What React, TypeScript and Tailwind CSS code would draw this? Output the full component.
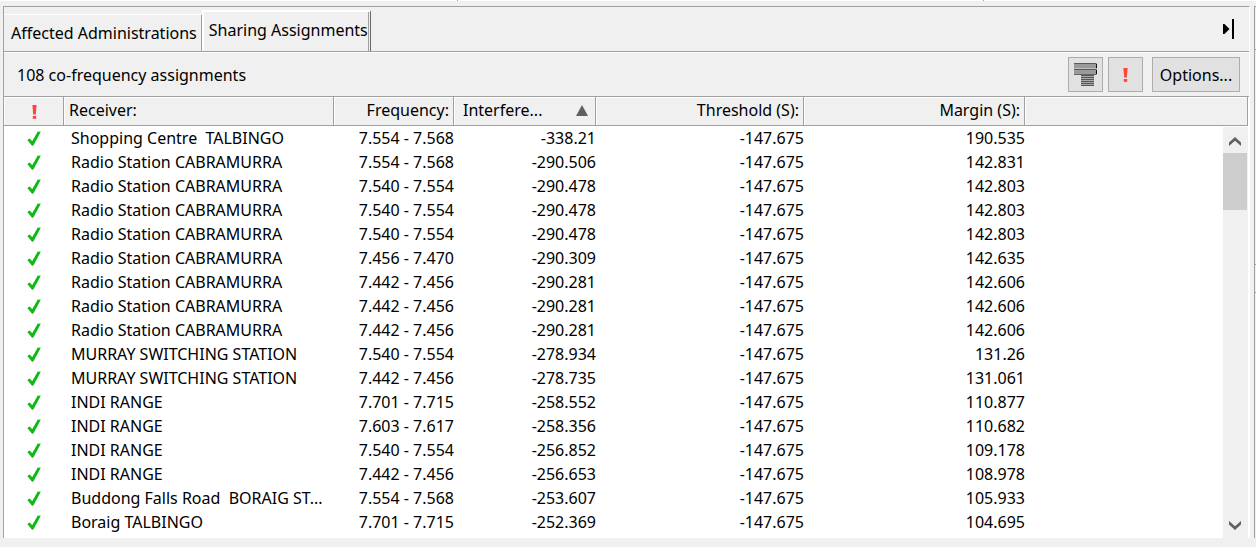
import { useState } from 'react'

interface Row { receiver: string; frequency: string; interference: string; margin: string }

const THRESHOLD = '-147.675'

const ROWS: Row[] = [
  { receiver: 'Shopping Centre  TALBINGO', frequency: '7.554 - 7.568', interference: '-338.21', margin: '190.535' },
  { receiver: 'Radio Station CABRAMURRA', frequency: '7.554 - 7.568', interference: '-290.506', margin: '142.831' },
  { receiver: 'Radio Station CABRAMURRA', frequency: '7.540 - 7.554', interference: '-290.478', margin: '142.803' },
  { receiver: 'Radio Station CABRAMURRA', frequency: '7.540 - 7.554', interference: '-290.478', margin: '142.803' },
  { receiver: 'Radio Station CABRAMURRA', frequency: '7.540 - 7.554', interference: '-290.478', margin: '142.803' },
  { receiver: 'Radio Station CABRAMURRA', frequency: '7.456 - 7.470', interference: '-290.309', margin: '142.635' },
  { receiver: 'Radio Station CABRAMURRA', frequency: '7.442 - 7.456', interference: '-290.281', margin: '142.606' },
  { receiver: 'Radio Station CABRAMURRA', frequency: '7.442 - 7.456', interference: '-290.281', margin: '142.606' },
  { receiver: 'Radio Station CABRAMURRA', frequency: '7.442 - 7.456', interference: '-290.281', margin: '142.606' },
  { receiver: 'MURRAY SWITCHING STATION', frequency: '7.540 - 7.554', interference: '-278.934', margin: '131.26' },
  { receiver: 'MURRAY SWITCHING STATION', frequency: '7.442 - 7.456', interference: '-278.735', margin: '131.061' },
  { receiver: 'INDI RANGE', frequency: '7.701 - 7.715', interference: '-258.552', margin: '110.877' },
  { receiver: 'INDI RANGE', frequency: '7.603 - 7.617', interference: '-258.356', margin: '110.682' },
  { receiver: 'INDI RANGE', frequency: '7.540 - 7.554', interference: '-256.852', margin: '109.178' },
  { receiver: 'INDI RANGE', frequency: '7.442 - 7.456', interference: '-256.653', margin: '108.978' },
  { receiver: 'Buddong Falls Road  BORAIG ST...', frequency: '7.554 - 7.568', interference: '-253.607', margin: '105.933' },
  { receiver: 'Boraig TALBINGO', frequency: '7.701 - 7.715', interference: '-252.369', margin: '104.695' },
]

const TABS = ['Affected Administrations', 'Sharing Assignments']

const HEAD = 'border-r border-b border-[#a0a0a0] p-0 font-normal'
const HEAD_INNER = 'flex h-7 items-center border-t border-l border-white pb-[3px]'
const TOOL_BUTTON = 'flex h-[35px] items-center justify-center border border-[#adadad] bg-[#e1e1e1]'

function Exclamation() {
  return (
    <svg width="5" height="14" viewBox="0 0 5 14" aria-hidden="true">
      <path d="M0.4 0h4.2l-0.8 9.4h-2.6z" fill="#ff4438" />
      <rect x="0.8" y="11" width="3.4" height="2.8" fill="#ff4438" />
    </svg>
  )
}

function Check() {
  return (
    <svg width="14" height="15" viewBox="0 0 14 15" className="mx-auto block" role="img" aria-label="OK">
      <path d="M0.3 9 L2.6 7.4 L5.2 10.2 L10.8 0.4 L13.8 0.8 L6.4 14.6 L5 14.8 Z" fill="#0dba10" />
    </svg>
  )
}

function FilterStack() {
  return (
    <svg width="23" height="24" viewBox="0 0 23 24" shapeRendering="crispEdges" aria-hidden="true">
      <rect x="0" y="0" width="23" height="12" fill="#9a9a9a" />
      <rect x="0" y="0" width="22" height="1" fill="#5a5a5a" />
      <rect x="0" y="5" width="22" height="1" fill="#c0c0c0" />
      <rect x="0" y="6" width="22" height="1" fill="#5a5a5a" />
      <rect x="0" y="11" width="22" height="1" fill="#666" />
      <rect x="22" y="1" width="1" height="4" fill="#111" />
      <rect x="22" y="7" width="1" height="4" fill="#111" />
      <rect x="7" y="12" width="13" height="11" fill="#aaa" />
      {[12, 14, 16, 18, 20, 22].map(y => (
        <rect key={y} x="7" y={y} width="13" height="1" fill="#555" />
      ))}
    </svg>
  )
}

function Chevron({ down = false }: { down?: boolean }) {
  return (
    <svg width="12" height="9" viewBox="0 0 12 9" aria-hidden="true" className={down ? 'rotate-180' : ''}>
      <path d="M0 5.4 L6 0 L12 5.4 V9 L6 3.8 L0 9 Z" fill="#606060" />
    </svg>
  )
}

export default function App() {
  const [tab, setTab] = useState(1)

  return (
    <div className="flex h-screen flex-col overflow-hidden bg-[#f0f0f0] font-['Noto_Sans',sans-serif] text-base leading-6 text-black">
      {/* bottom edge of the panes above */}
      <div className="flex h-px shrink-0 bg-white">
        <div className="w-[458px] border-r border-[#a0a0a0]" />
        <div className="w-[526px] border-r border-[#a0a0a0]" />
      </div>

      <div className="flex min-h-0 flex-1 gap-1 pt-[5px] pb-[9px] pl-[3px]">
        <main className="flex min-w-0 flex-1 flex-col border-t border-r border-l border-t-[#a0a0a0] border-r-white border-l-[#a0a0a0]">
          <div className="flex h-[45px] shrink-0 items-end border-b border-[#a0a0a0]">
            <div role="tablist" className="flex h-full items-end">
              {TABS.map((label, i) => (
                <button
                  key={label}
                  role="tab"
                  aria-selected={tab === i}
                  onClick={() => setTab(i)}
                  className={tab === i
                    ? 'h-[41px] border-t-2 border-r border-l-2 border-t-white border-r-[#696969] border-l-white pr-px'
                    : 'h-[37px] border-t border-r border-t-white border-r-[#a0a0a0] pr-1 pl-[7px]'}
                >
                  {tab === i
                    ? <span className="flex h-full items-center border-r border-[#a0a0a0] pb-[3px] pl-[5px]">{label}</span>
                    : label}
                </button>
              ))}
            </div>
            <button aria-label="Collapse panel" className="mr-[14px] mb-3 ml-auto">
              <svg width="12" height="20" viewBox="0 0 12 20" className="block" aria-hidden="true">
                <path d="M0 5 H1.5 L6.5 10 L1.5 15 H0 Z" fill="#000" />
                <rect x="9" y="0" width="2" height="20" fill="#000" />
              </svg>
            </button>
          </div>

          <div className="flex h-[45px] shrink-0 items-center border-t border-b border-t-white border-b-[#a0a0a0] pr-[9px] pl-[13px]">
            <span className="mr-auto">108 co-frequency assignments</span>
            <button aria-label="Group assignments" className={`${TOOL_BUTTON} mr-[5px] w-[35px]`}>
              <FilterStack />
            </button>
            <button aria-label="Show failures" className={`${TOOL_BUTTON} mr-[9px] w-[35px]`}>
              <Exclamation />
            </button>
            <button className={`${TOOL_BUTTON} w-[88px]`}>Options...</button>
          </div>

          <div className="grid min-h-0 flex-1 grid-cols-[minmax(0,1fr)_25px] grid-rows-[29px_minmax(0,1fr)] bg-white pr-px">
            <div className="col-span-2 col-start-1 row-span-2 row-start-1 overflow-hidden">
              <table className="w-full table-fixed border-separate border-spacing-0">
                <colgroup>
                  <col className="w-[60px]" />
                  <col className="w-[270px]" />
                  <col className="w-[120px]" />
                  <col className="w-[142px]" />
                  <col className="w-[208px]" />
                  <col className="w-[221px]" />
                  <col />
                </colgroup>
                <thead className="bg-[#f0f0f0]">
                  <tr>
                    <th scope="col" aria-label="Status" className={HEAD}>
                      <div className="flex h-7 items-center justify-center border-t border-l border-white"><Exclamation /></div>
                    </th>
                    <th scope="col" className={HEAD}><div className={`${HEAD_INNER} pl-1`}>Receiver:</div></th>
                    <th scope="col" className={HEAD}><div className={`${HEAD_INNER} justify-end pr-1`}>Frequency:</div></th>
                    <th scope="col" aria-sort="ascending" className={HEAD}>
                      <div className={`${HEAD_INNER} justify-between pr-[7px] pl-2`}>
                        Interfere...
                        <svg width="12" height="11" viewBox="0 0 12 11" aria-hidden="true">
                          <path d="M6 0 L12 11 H0 Z" fill="#606060" />
                        </svg>
                      </div>
                    </th>
                    <th scope="col" className={HEAD}><div className={`${HEAD_INNER} justify-end pr-1`}>Threshold (S):</div></th>
                    <th scope="col" className={HEAD}><div className={`${HEAD_INNER} justify-end pr-1`}>Margin (S):</div></th>
                    <td className={HEAD}><div className={HEAD_INNER} /></td>
                  </tr>
                </thead>
                <tbody>
                  {ROWS.map((r, i) => (
                    <tr key={i} className="h-6 text-right">
                      <td className="p-0"><Check /></td>
                      <td className="overflow-hidden p-0 pl-[7px] text-left whitespace-pre">{r.receiver}</td>
                      <td className="p-0 whitespace-nowrap">{r.frequency}</td>
                      <td className="p-0">{r.interference}</td>
                      <td className="p-0">{THRESHOLD}</td>
                      <td className="p-0">{r.margin}</td>
                      <td className="p-0" />
                    </tr>
                  ))}
                </tbody>
              </table>
            </div>

            <div className="col-start-2 row-start-2 mt-px flex flex-col bg-[#f0f0f0] pr-px">
              <button aria-label="Scroll up" className="flex h-[26px] shrink-0 items-center justify-center pt-[3px]"><Chevron /></button>
              <div className="h-[57px] bg-[#cdcdcd]" />
              <button aria-label="Scroll down" className="mt-auto flex h-[26px] shrink-0 items-center justify-center"><Chevron down /></button>
            </div>
          </div>
        </main>

        {/* left edge of the neighbouring pane */}
        <aside className="w-[2px] shrink-0 border-t border-l border-[#a0a0a0]">
          <div className="h-[43px] border-b border-[#a0a0a0]" />
          <div className="h-[215px] border-b border-[#a0a0a0]" />
          <div className="h-7 border-b border-[#a0a0a0]" />
        </aside>
      </div>
    </div>
  )
}
